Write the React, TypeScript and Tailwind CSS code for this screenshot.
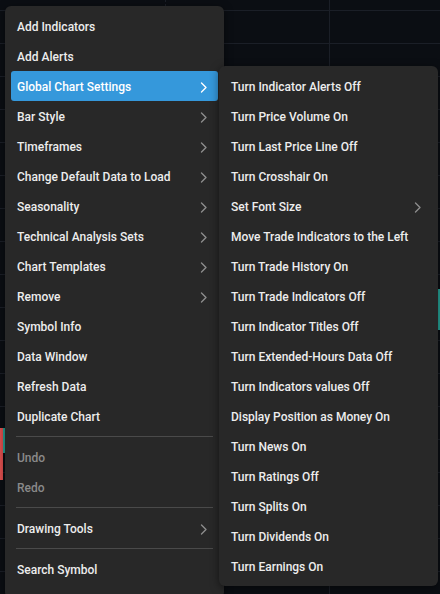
import React from "react";

const Chevron = ({ active }: { active?: boolean }) => (
  <svg width="7" height="11" viewBox="0 0 7 11" className="shrink-0">
    <polyline
      points="1.5,1 6,5.5 1.5,10"
      fill="none"
      stroke={active ? "#ffffff" : "#8c8c8c"}
      strokeWidth="1.4"
      strokeLinecap="round"
      strokeLinejoin="round"
    />
  </svg>
);

type Item = { label: string; sub?: boolean; active?: boolean; disabled?: boolean } | "sep";

const mainItems: Item[] = [
  { label: "Add Indicators" },
  { label: "Add Alerts" },
  { label: "Global Chart Settings", sub: true, active: true },
  { label: "Bar Style", sub: true },
  { label: "Timeframes", sub: true },
  { label: "Change Default Data to Load", sub: true },
  { label: "Seasonality", sub: true },
  { label: "Technical Analysis Sets", sub: true },
  { label: "Chart Templates", sub: true },
  { label: "Remove", sub: true },
  { label: "Symbol Info" },
  { label: "Data Window" },
  { label: "Refresh Data" },
  { label: "Duplicate Chart" },
  "sep",
  { label: "Undo", disabled: true },
  { label: "Redo", disabled: true },
  "sep",
  { label: "Drawing Tools", sub: true },
  "sep",
  { label: "Search Symbol" },
];

const subItems: Item[] = [
  { label: "Turn Indicator Alerts Off" },
  { label: "Turn Price Volume On" },
  { label: "Turn Last Price Line Off" },
  { label: "Turn Crosshair On" },
  { label: "Set Font Size", sub: true },
  { label: "Move Trade Indicators to the Left" },
  { label: "Turn Trade History On" },
  { label: "Turn Trade Indicators Off" },
  { label: "Turn Indicator Titles Off" },
  { label: "Turn Extended-Hours Data Off" },
  { label: "Turn Indicators values Off" },
  { label: "Display Position as Money On" },
  { label: "Turn News On" },
  { label: "Turn Ratings Off" },
  { label: "Turn Splits On" },
  { label: "Turn Dividends On" },
  { label: "Turn Earnings On" },
];

const Rows = ({ items }: { items: Item[] }) => (
  <>
    {items.map((it, i) =>
      it === "sep" ? (
        <div key={i} className="mx-[5px] my-[5px] h-px bg-[#4a4a4a]" />
      ) : (
        <div
          key={i}
          className={
            "flex h-[30px] items-center justify-between rounded-[3px] pl-[6px] pr-[11px] pt-[2px] " +
            (it.active ? "bg-[#3598db] text-white" : it.disabled ? "text-[#8a8a8a]" : "text-[#ededed]")
          }
        >
          <span className="whitespace-nowrap">{it.label}</span>
          {it.sub && <Chevron active={it.active} />}
        </div>
      )
    )}
  </>
);

export default function App() {
  const hLines = Array.from({ length: 19 }, (_, i) => 10 + i * 33);
  return (
    <div
      className="relative h-[594px] w-[440px] overflow-hidden bg-[#0b0e13] text-[12px] font-medium"
      style={{ fontFamily: "Roboto, 'Liberation Sans', sans-serif" }}
    >
      <svg className="absolute inset-0" width="440" height="594">
        {hLines.map((y) => (
          <line key={y} x1="0" x2="440" y1={y + 0.5} y2={y + 0.5} stroke="#1b1f27" strokeWidth="1" />
        ))}
        <line x1="165.5" x2="165.5" y1="0" y2="594" stroke="#1b1f27" strokeWidth="1" strokeDasharray="2 2" />
        <line x1="329.5" x2="329.5" y1="0" y2="594" stroke="#1b1f27" strokeWidth="1" />
        <rect x="0" y="428" width="3" height="52" fill="#e0504f" />
        <rect x="3" y="428" width="2" height="25" fill="#26a69a" />
        <rect x="438" y="289" width="2" height="41" fill="#26a69a" />
      </svg>

      <div className="absolute left-[5px] top-[6px] flex h-[592px] w-[219px] flex-col rounded-[6px] bg-[#282828] px-[6px] py-[5px] shadow-[0_2px_8px_rgba(0,0,0,0.5)]">
        <Rows items={mainItems} />
      </div>

      <div className="absolute left-[219px] top-[66px] flex w-[219px] flex-col rounded-[6px] bg-[#282828] px-[6px] py-[5px] shadow-[0_2px_8px_rgba(0,0,0,0.5)]">
        <Rows items={subItems} />
      </div>
    </div>
  );
}
